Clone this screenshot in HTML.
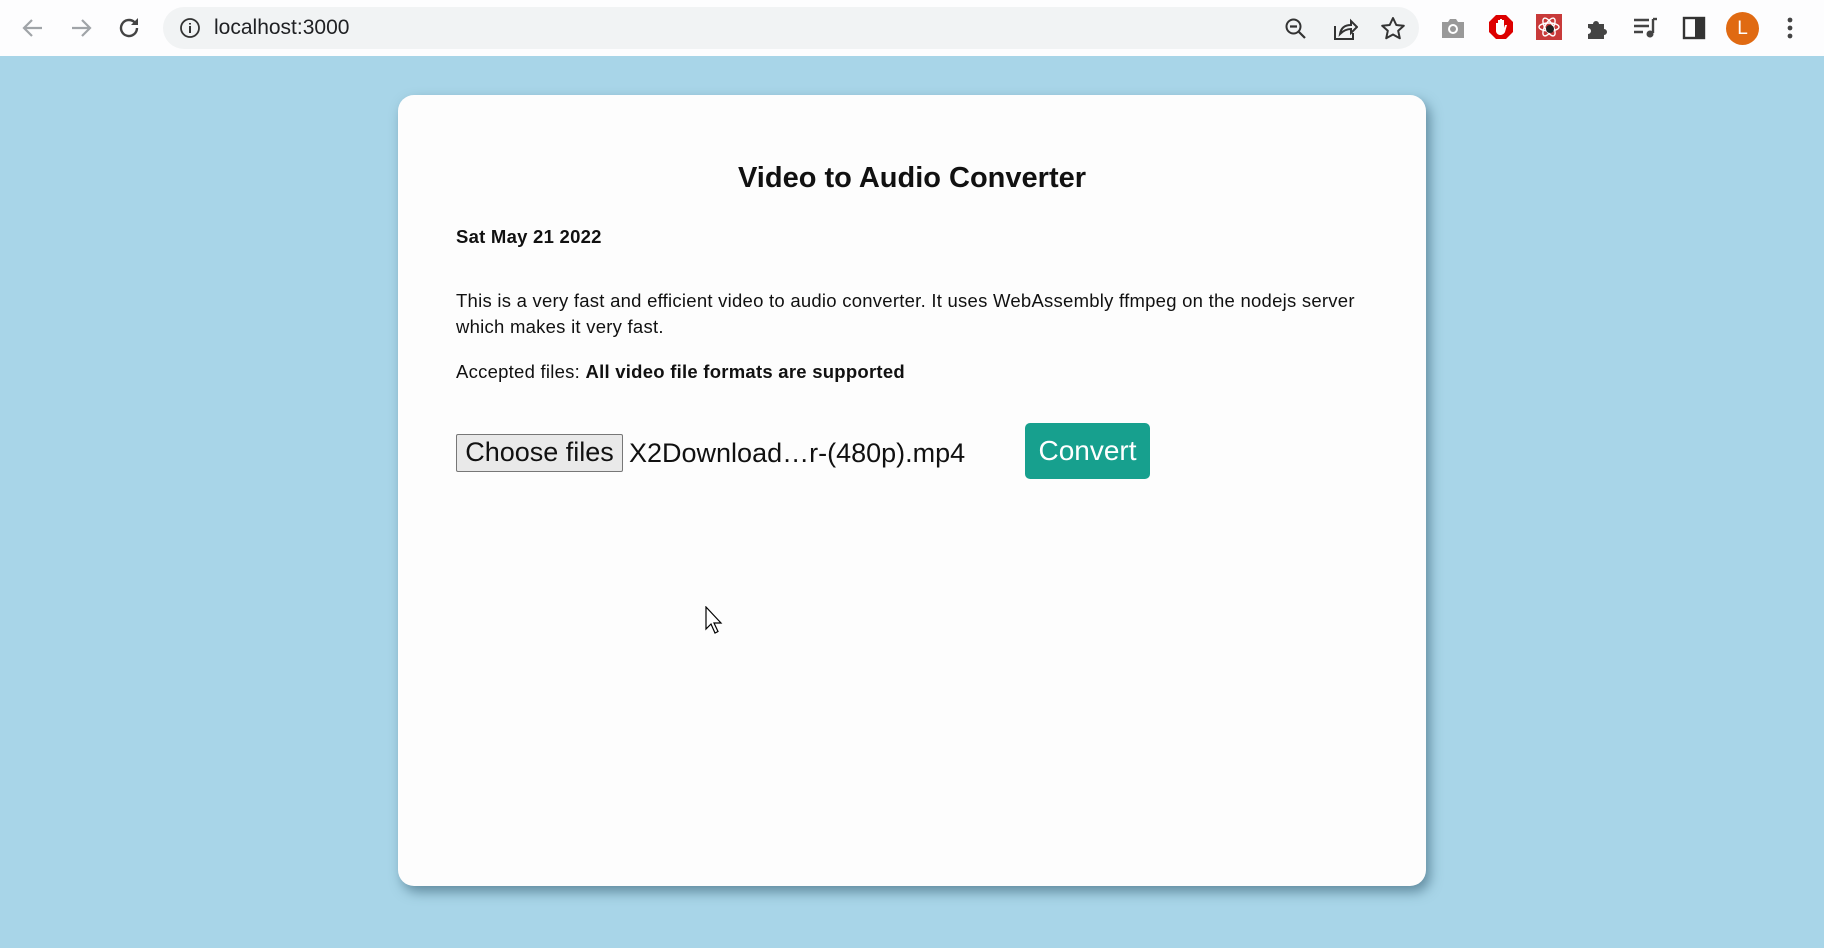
<!DOCTYPE html>
<html><head><meta charset="utf-8"><style>
*{margin:0;padding:0;box-sizing:border-box}
body{width:1824px;height:948px;overflow:hidden;background:#a8d5e8;font-family:"Liberation Sans",sans-serif;position:relative}
.bar{position:absolute;left:0;top:0;width:1824px;height:56px;background:#fdfdfe}
.url{position:absolute;left:163px;top:7px;width:1256px;height:42px;border-radius:21px;background:#f1f3f4}
.url span{position:absolute;left:51px;top:9px;font-size:21px;color:#202124}
.ic{position:absolute}
.card{position:absolute;left:398px;top:95px;width:1028px;height:791px;background:#fdfdfd;border-radius:16px;box-shadow:4px 6px 12px rgba(40,80,100,.55)}
h1{position:absolute;left:0;width:100%;top:67px;text-align:center;font-size:29px;font-weight:bold;color:#111}
.t{position:absolute;left:58px;font-size:18.5px;color:#111;line-height:26px;letter-spacing:0.25px}
.btn{position:absolute;left:58px;top:339px;width:167px;height:38px;background:#e9e9e9;border:1px solid #777;border-radius:2px;font-size:27px;line-height:34px;text-align:center;color:#111}
.fn{position:absolute;left:231px;top:340px;font-size:27px;color:#111;line-height:36px}
.cv{position:absolute;left:627px;top:328px;width:125px;height:56px;background:#17a08e;border-radius:5px;color:#fff;font-size:28px;line-height:56px;text-align:center}
</style></head><body>
<div class="bar">
<svg class="ic" style="left:20px;top:16px" width="26" height="24" viewBox="0 0 26 24"><path d="M22 12H5M12 4l-8 8 8 8" stroke="#a0a4a8" stroke-width="2.2" fill="none"/></svg>
<svg class="ic" style="left:68px;top:16px" width="26" height="24" viewBox="0 0 26 24"><path d="M4 12h17M14 4l8 8-8 8" stroke="#a0a4a8" stroke-width="2.2" fill="none"/></svg>
<svg class="ic" style="left:117px;top:15px" width="26" height="26" viewBox="0 0 26 26"><path d="M20 13a8 8 0 1 1-2.5-5.8" stroke="#444" stroke-width="2.4" fill="none"/><path d="M21 3v7h-7z" fill="#444"/></svg>
<div class="url"><svg class="ic" style="left:16px;top:10px" width="22" height="22" viewBox="0 0 22 22"><circle cx="11" cy="11" r="9" stroke="#333" stroke-width="1.8" fill="none"/><path d="M11 9v7M11 6v1.5" stroke="#333" stroke-width="2"/></svg><span>localhost:3000</span></div>
<svg class="ic" style="left:1284px;top:17px" width="24" height="24" viewBox="0 0 24 24"><circle cx="9.5" cy="9.5" r="7" stroke="#333" stroke-width="2" fill="none"/><path d="M6 9.5h7M15 15l6 6" stroke="#333" stroke-width="2.2"/></svg>
<svg class="ic" style="left:1332px;top:16px" width="26" height="26" viewBox="0 0 26 26"><path d="M3 10v13h18v-6" stroke="#333" stroke-width="2" fill="none"/><path d="M8 18c1-6 5-9 11-9V5l6 6-6 6v-4c-5 0-8 2-11 5z" stroke="#333" stroke-width="2" fill="none"/></svg>
<svg class="ic" style="left:1380px;top:16px" width="26" height="26" viewBox="0 0 26 26"><path d="M13 2l3.3 7 7.5.8-5.6 5 1.6 7.5L13 18.5 6.2 22.3l1.6-7.5-5.6-5 7.5-.8z" stroke="#333" stroke-width="2" fill="none" stroke-linejoin="round"/></svg>
<svg class="ic" style="left:1440px;top:17px" width="26" height="22" viewBox="0 0 26 22"><path d="M2 5h6l2-3h6l2 3h6v16H2z" fill="#999"/><circle cx="13" cy="12" r="5" fill="#fff"/><circle cx="13" cy="12" r="3" fill="#999"/></svg>
<svg class="ic" style="left:1488px;top:14px" width="26" height="26" viewBox="0 0 26 26"><path d="M8 1h10l7 7v10l-7 7H8l-7-7V8z" fill="#d00"/><path d="M8 14V9h2v4V6h2v7V5h2v8V6h2v8l1-3h2l-2 7c-1 2-3 3-5 3s-4-2-4-4z" fill="#fff"/></svg>
<svg class="ic" style="left:1536px;top:14px" width="26" height="26" viewBox="0 0 26 26"><rect width="26" height="26" fill="#c83a3a"/><ellipse cx="13" cy="13" rx="10" ry="4" stroke="#fff" fill="none" stroke-width="1.4"/><ellipse cx="13" cy="13" rx="10" ry="4" stroke="#fff" fill="none" stroke-width="1.4" transform="rotate(60 13 13)"/><ellipse cx="13" cy="13" rx="10" ry="4" stroke="#fff" fill="none" stroke-width="1.4" transform="rotate(-60 13 13)"/><circle cx="14" cy="15" r="4" fill="#222"/></svg>
<svg class="ic" style="left:1585px;top:15px" width="26" height="26" viewBox="0 0 26 26"><path d="M3 9h5a3 3 0 1 1 6 0h5v5a3 3 0 1 1 0 6v4H3v-5a3 3 0 1 0 0-6z" fill="#444"/></svg>
<svg class="ic" style="left:1632px;top:16px" width="26" height="24" viewBox="0 0 26 24"><path d="M2 4h15M2 10h15M2 16h9" stroke="#444" stroke-width="2.4"/><path d="M21 3v14" stroke="#444" stroke-width="2.4"/><circle cx="18" cy="18" r="3.5" fill="#444"/><path d="M21 3h4" stroke="#444" stroke-width="2.4"/></svg>
<svg class="ic" style="left:1682px;top:16px" width="24" height="24" viewBox="0 0 24 24"><rect x="2" y="2" width="20" height="20" stroke="#333" stroke-width="2.4" fill="none"/><rect x="13" y="2" width="9" height="20" fill="#333"/></svg>
<div class="ic" style="left:1726px;top:12px;width:33px;height:33px;border-radius:50%;background:#e06a12;color:#fff;font-size:19px;line-height:33px;text-align:center">L</div>
<svg class="ic" style="left:1786px;top:16px" width="8" height="24" viewBox="0 0 8 24"><circle cx="4" cy="4" r="2.4" fill="#444"/><circle cx="4" cy="12" r="2.4" fill="#444"/><circle cx="4" cy="20" r="2.4" fill="#444"/></svg>
</div>
<div class="card">
<h1>Video to Audio Converter</h1>
<div class="t" style="top:129px;font-weight:bold">Sat May 21 2022</div>
<div class="t" style="top:193px;width:930px">This is a very fast and efficient video to audio converter. It uses WebAssembly ffmpeg on the nodejs server which makes it very fast.</div>
<div class="t" style="top:264px">Accepted files: <b>All video file formats are supported</b></div>
<div class="btn">Choose files</div>
<div class="fn">X2Download…r-(480p).mp4</div>
<div class="cv">Convert</div>
</div>
<svg class="ic" style="left:705px;top:606px" width="20" height="30" viewBox="0 0 20 30"><path d="M1 1v22l5-5 4 9 3-1.5-4-8.5h7z" fill="#fff" stroke="#000" stroke-width="1.2"/></svg>
</body></html>
